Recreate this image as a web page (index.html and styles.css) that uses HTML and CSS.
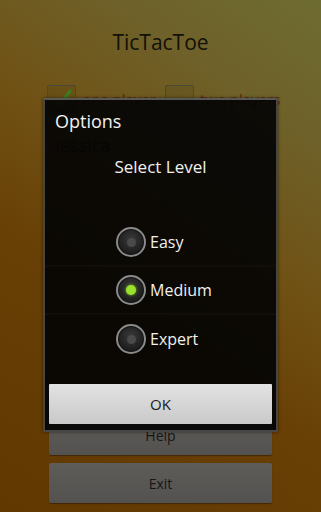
FILE: index.html
```html
<!DOCTYPE html>
<html>
<head>
<meta charset="utf-8">
<link rel="stylesheet" href="styles.css">
</head>
<body>
<div class="screen">
  <h1 class="title">TicTacToe</h1>
  <div class="players">
    <label class="check"><span class="box"><svg width="22" height="22" viewBox="0 0 22 22"><path d="M4 12 L9 17 L19 3" fill="none" stroke="#3f7a1c" stroke-width="3.5" stroke-linecap="round" stroke-linejoin="round"/></svg></span><span class="ctext">one player</span></label>
    <label class="check"><span class="box"></span><span class="ctext">two players</span></label>
  </div>
  <div class="name">Jessica</div>
  <div class="spacer"></div>
  <div class="btns">
    <div class="btn">Help</div>
    <div class="btn">Exit</div>
  </div>

  <div class="dialog">
    <div class="dtitle">Options</div>
    <div class="dbody">
      <div class="heading">Select Level</div>
      <div class="levels">
        <div class="row"><span class="radio"><span class="dot"></span></span><span class="rlabel">Easy</span></div>
        <div class="row"><span class="radio on"><span class="dot"></span></span><span class="rlabel">Medium</span></div>
        <div class="row last"><span class="radio"><span class="dot"></span></span><span class="rlabel">Expert</span></div>
      </div>
    </div>
    <div class="dfoot"><div class="ok">OK</div></div>
  </div>
</div>
</body>
</html>
```
FILE: styles.css
```css
* { box-sizing: border-box; margin: 0; padding: 0; }
html, body { width: 321px; height: 512px; overflow: hidden; }
body {
  font-family: "Open Sans", "DejaVu Sans", sans-serif;
}
.screen {
  position: relative;
  width: 321px;
  height: 512px;
  display: flex;
  flex-direction: column;
  background:
    linear-gradient(215deg, #6e6c32 0%, #6e6129 20%, #705114 42%, #683f05 62%, #613800 100%);
}
.title {
  font-weight: normal;
  font-size: 21px;
  color: #111108;
  text-align: center;
  padding-top: 28px;
  line-height: 28px;
  height: 84px;
}
.players {
  display: flex;
  padding-left: 47px;
  height: 30px;
  align-items: center;
}
.check { display: flex; align-items: center; }
.check + .check { margin-left: 9px; }
.box {
  width: 29px; height: 29px;
  border: 1px solid #4a4a3a;
  border-radius: 2px;
  background: rgba(0,0,0,0.06);
  display: flex; align-items: center; justify-content: center;
}
.ctext {
  margin-left: 6px;
  font-size: 15px;
  color: #5e2a10;
}
.name {
  margin: 19px 0 0 55px;
  font-size: 18px;
  color: #1e1a10;
}
.spacer { flex: 1; }
.btns {
  display: flex;
  flex-direction: column;
  gap: 8px;
  padding: 0 49px 9px 49px;
}
.btn {
  height: 40px;
  background: linear-gradient(#5e5c58, #545250);
  border-radius: 2px;
  box-shadow: 0 1px 1px rgba(0,0,0,0.35);
  display: flex; align-items: center; justify-content: center;
  font-size: 14px;
  color: #151515;
}

.dialog {
  position: absolute;
  left: 43px;
  top: 98px;
  width: 235px;
  height: 334px;
  background: rgba(4,4,4,0.93);
  border: 2px solid #464644;
  border-top-color: #585856;
  display: flex;
  flex-direction: column;
  box-shadow: 0 0 3px rgba(0,0,0,0.5);
}
.dtitle {
  color: #f2f2f2;
  font-size: 18px;
  line-height: 24px;
  padding: 9px 0 0 10px;
  height: 46px;
}
.dbody { flex: 1; display: flex; flex-direction: column; }
.heading {
  color: #f0f0f0;
  font-size: 17px;
  text-align: center;
  line-height: 22px;
  margin-top: 10px;
}
.levels {
  margin-top: 41px;
  display: flex;
  flex-direction: column;
}
.row {
  height: 48px;
  display: flex;
  align-items: center;
  padding-left: 71px;
  border-bottom: 2px solid #120d08;
}
.row.last { border-bottom: none; }
.radio {
  width: 30px; height: 30px;
  border-radius: 50%;
  border: 2px solid #8a8a8a;
  background: radial-gradient(circle at 50% 40%, #3a3a3a, #1c1c1c 70%);
  box-shadow: inset 0 0 0 1px #111;
  display: flex; align-items: center; justify-content: center;
}
.dot {
  width: 9px; height: 9px;
  border-radius: 50%;
  background: #4a4a4a;
}
.radio.on .dot {
  width: 10px; height: 10px;
  background: #9be22e;
  box-shadow: 0 0 3px #7ac81e;
}
.rlabel {
  margin-left: 4px;
  color: #f0f0f0;
  font-size: 16px;
}
.dfoot {
  height: 50px;
  padding: 4px 4px 4px 4px;
}
.ok {
  height: 40px;
  background: linear-gradient(#e2e2e2, #c9c9c9);
  border-radius: 1px;
  display: flex; align-items: center; justify-content: center;
  font-size: 15px;
  color: #1a1a1a;
}
```
